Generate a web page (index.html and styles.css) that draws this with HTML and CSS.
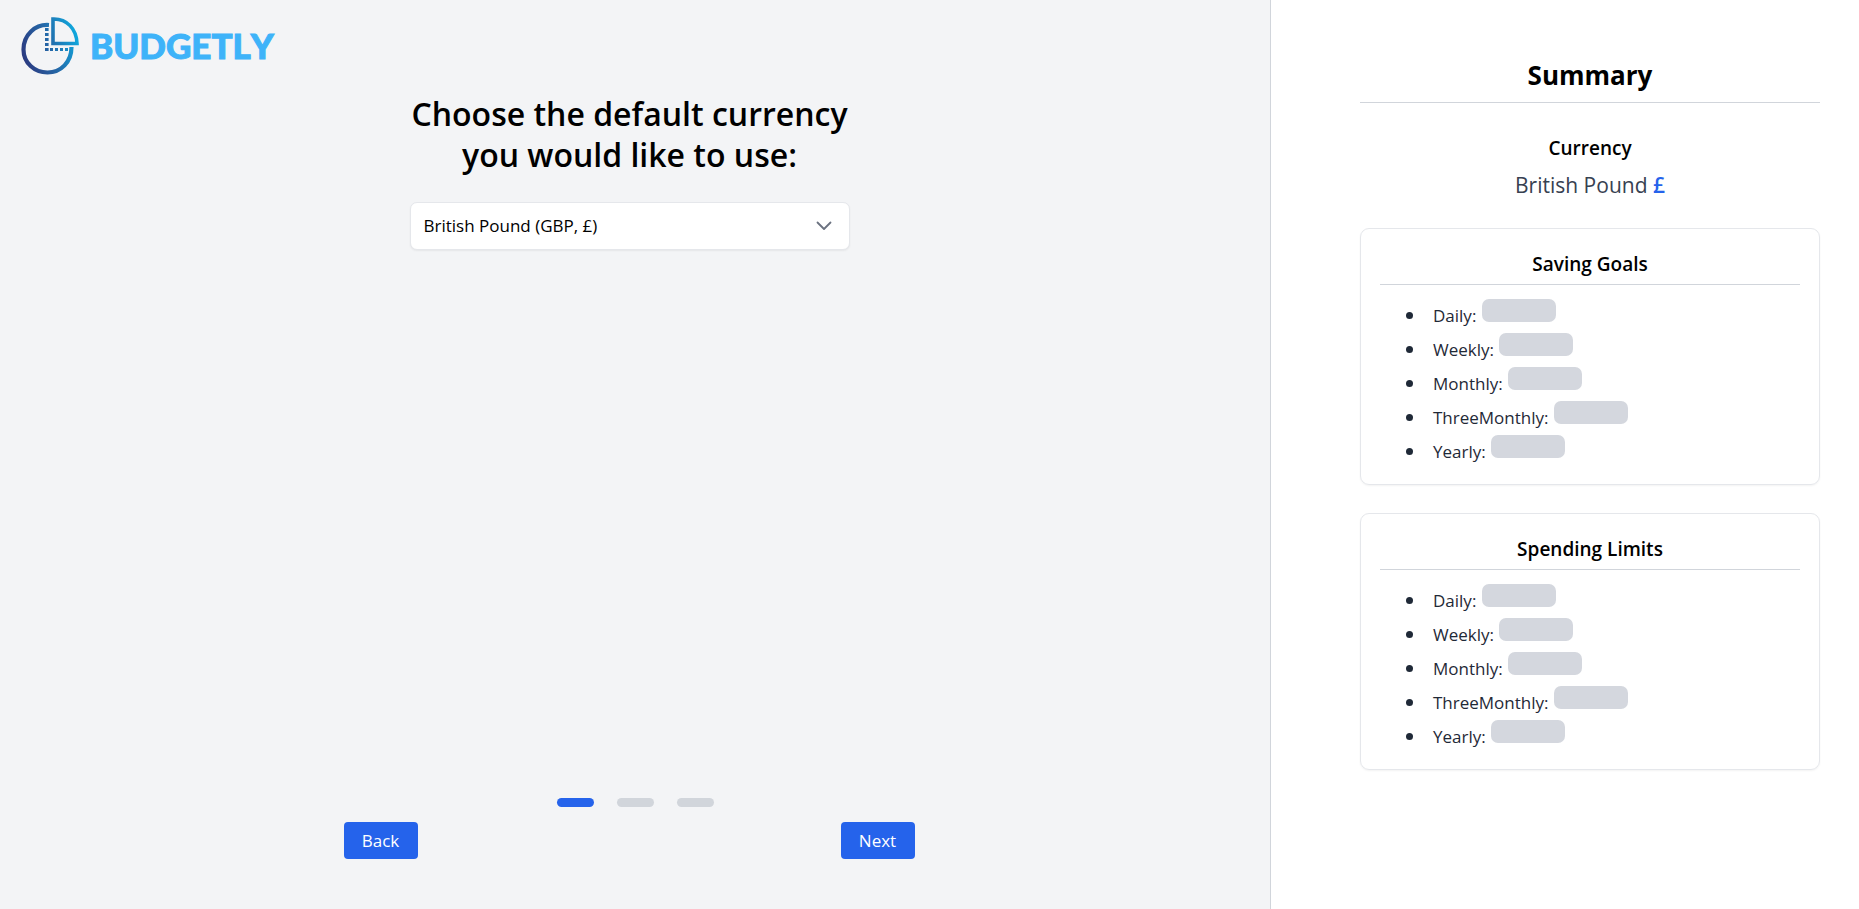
FILE: index.html
```html
<!DOCTYPE html>
<html lang="en">
<head>
  <meta charset="UTF-8">
  <meta name="viewport" content="width=device-width, initial-scale=1.0">
  <title>Budgetly - Setup</title>
  <link rel="stylesheet" href="styles.css">
</head>
<body>
  <div class="layout">
    <main class="setup">
      <a class="logo" href="#">
        <svg class="logo-icon" viewBox="0 0 60 60" fill="none" aria-hidden="true">
          <defs>
            <linearGradient id="logo-gradient" gradientUnits="userSpaceOnUse" x1="2" y1="40" x2="58" y2="22">
              <stop offset="0" stop-color="#2b3a80"/>
              <stop offset="0.5" stop-color="#2468a8"/>
              <stop offset="1" stop-color="#0fa8de"/>
            </linearGradient>
          </defs>
          <g stroke="url(#logo-gradient)">
            <path stroke-width="4.2" d="M29 10C15 9 3.500 20 3.500 34.500C3.500 48 14.500 57.500 27.500 57.500C41 57.500 51.500 47 51.500 32"/>
            <path stroke-width="3.6" d="M33 4V28.500H57C56.500 14 47 3.500 33 4Z"/>
            <path stroke-width="3.6" stroke-dasharray="3 2" d="M26.800 13V36"/>
            <path stroke-width="3" stroke-dasharray="3 2" d="M25 34.500H49"/>
          </g>
        </svg>
        <span class="logo-text">BUDGETLY</span>
      </a>

      <form class="step">
        <div class="step-content">
          <h1><label for="currency">Choose the default currency you would like to use:</label></h1>
          <div class="select-box">
            <select id="currency">
              <option>British Pound (GBP, £)</option>
            </select>
            <svg class="chevron" viewBox="0 0 16 16" fill="none" aria-hidden="true">
              <path d="M1.500 4.500L8 11L14.500 4.500" stroke="#6b7280" stroke-width="1.8" stroke-linecap="round" stroke-linejoin="round"/>
            </svg>
          </div>
        </div>

        <div class="step-footer">
          <div class="dots">
            <span class="dot active"></span>
            <span class="dot"></span>
            <span class="dot"></span>
          </div>
          <div class="buttons">
            <button type="button">Back</button>
            <button type="button">Next</button>
          </div>
        </div>
      </form>
    </main>

    <aside class="summary">
      <h2>Summary</h2>

      <div class="currency">
        <h3>Currency</h3>
        <p>British Pound <span class="symbol">£</span></p>
      </div>

      <section class="card">
        <h3>Saving Goals</h3>
        <ul>
          <li>Daily: <span class="skeleton"></span></li>
          <li>Weekly: <span class="skeleton"></span></li>
          <li>Monthly: <span class="skeleton"></span></li>
          <li>ThreeMonthly: <span class="skeleton"></span></li>
          <li>Yearly: <span class="skeleton"></span></li>
        </ul>
      </section>

      <section class="card">
        <h3>Spending Limits</h3>
        <ul>
          <li>Daily: <span class="skeleton"></span></li>
          <li>Weekly: <span class="skeleton"></span></li>
          <li>Monthly: <span class="skeleton"></span></li>
          <li>ThreeMonthly: <span class="skeleton"></span></li>
          <li>Yearly: <span class="skeleton"></span></li>
        </ul>
      </section>
    </aside>
  </div>
</body>
</html>
```
FILE: styles.css
```css
* {
  box-sizing: border-box;
}
body {
  margin: 0;
  font-family: "Segoe UI", "Open Sans", "Noto Sans", sans-serif;
  font-size: 17px;
  line-height: 28px;
  color: #000;
  background: #f3f4f6;
}
h1, h2, h3, p, ul {
  margin: 0;
  padding: 0;
}
.layout {
  display: flex;
  min-height: 100vh;
}

/* left side */
.setup {
  flex: 1;
  display: flex;
  flex-direction: column;
}
.logo {
  display: flex;
  align-items: center;
  gap: 10px;
  height: 90px;
  padding-left: 20px;
  text-decoration: none;
}
.logo-icon {
  width: 60px;
  height: 60px;
}
.logo-text {
  font-family: Lato, sans-serif;
  font-size: 35px;
  font-weight: 900;
  font-kerning: none;
  color: #3eb3f9;
  -webkit-text-stroke: 1px #3eb3f9;
}
.step {
  flex: 1;
  display: flex;
  flex-direction: column;
  align-items: center;
  padding: 3px 0 50px;
}
.step-content {
  width: 440px;
  margin-right: 11px;
}
h1 {
  font-size: 32px;
  font-weight: 600;
  line-height: 41px;
  text-align: center;
}
.select-box {
  position: relative;
  margin-top: 27px;
}
select {
  appearance: none;
  width: 100%;
  height: 48px;
  padding: 0 48px 0 13px;
  font: inherit;
  color: #000;
  background: #fff;
  border: 1px solid #e5e7eb;
  border-radius: 7px;
  box-shadow: 0 1px 2px rgba(0,0,0,0.06);
}
.chevron {
  position: absolute;
  top: 16px;
  right: 18px;
  width: 16px;
  height: 16px;
  pointer-events: none;
}
.step-footer {
  width: 100%;
  margin-top: auto;
}
.dots {
  display: flex;
  justify-content: center;
  gap: 23px;
}
.dot {
  width: 37px;
  height: 9px;
  border-radius: 5px;
  background: #d1d5db;
}
.dot.active {
  background: #2563eb;
}
.buttons {
  display: flex;
  justify-content: space-between;
  width: 583px;
  margin: 15px auto 0;
  padding-right: 12px;
}
button {
  min-width: 74px;
  height: 37px;
  padding: 0 18px;
  font: inherit;
  color: #fff;
  background: #2563eb;
  border: 0;
  border-radius: 4px;
  cursor: pointer;
}

/* right side */
.summary {
  width: 589px;
  padding: 57px 39px 40px 89px;
  background: #fff;
  border-left: 1px solid #d1d5db;
}
.summary h2 {
  padding-bottom: 9px;
  font-size: 26px;
  font-weight: 700;
  line-height: 36px;
  text-align: center;
  border-bottom: 1px solid #d1d5db;
}
.summary h3 {
  font-size: 19px;
  font-weight: 600;
  line-height: 32px;
  text-align: center;
}
.currency {
  margin: 29px 0 27px;
  text-align: center;
}
.currency p {
  margin-top: 5px;
  font-size: 21px;
  line-height: 32px;
  color: #374151;
}
.symbol {
  font-weight: 600;
  color: #2563eb;
}
.card {
  padding: 19px 19px 15px;
  border: 1px solid #e5e7eb;
  border-radius: 9px;
  box-shadow: 0 1px 2px rgba(0,0,0,0.05);
}
.card + .card {
  margin-top: 28px;
}
.card h3 {
  padding-bottom: 4px;
  border-bottom: 1px solid #d1d5db;
}
.card ul {
  margin-top: 14px;
  padding-left: 53px;
  list-style: none;
  color: #1f2937;
}
.card li {
  height: 34px;
}
.card li::before {
  content: "";
  display: inline-block;
  width: 7px;
  height: 7px;
  margin: 0 20px 0 -27px;
  vertical-align: 3px;
  border-radius: 50%;
  background: #1f2937;
}
.skeleton {
  display: inline-block;
  width: 74px;
  height: 23px;
  margin-left: 1px;
  border-radius: 7px;
  background: #d4d7de;
}
```
